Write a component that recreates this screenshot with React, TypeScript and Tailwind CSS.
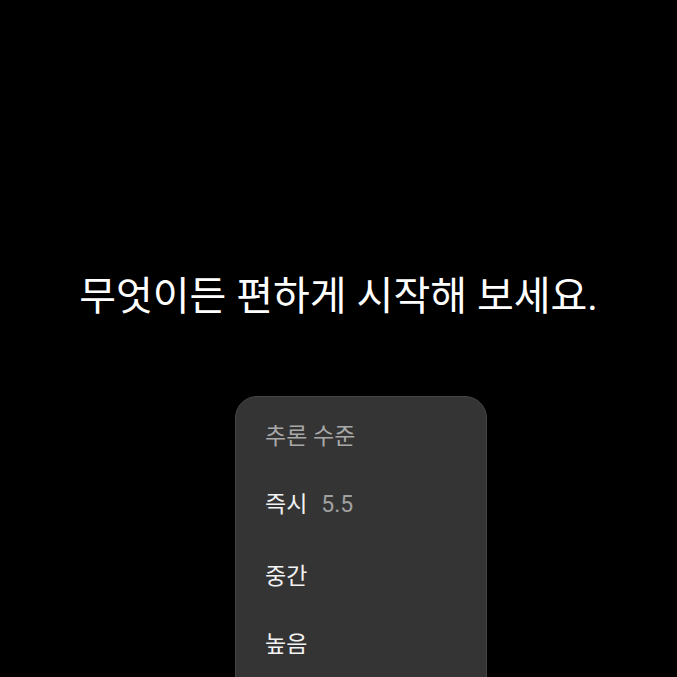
export default function App() {
  return (
    <div className="h-screen w-full overflow-hidden bg-black font-['Roboto','Noto_Sans_CJK_KR',sans-serif] text-white">
      <div className="flex flex-col pt-[273px]">
        <h1 className="text-center text-[40px] leading-[48px] font-normal">무엇이든 편하게 시작해 보세요.</h1>
        <div className="mt-[75px] pl-[235px]">
          <div className="w-[252px] h-[320px] rounded-[22px] border border-[#464646] bg-[#343434] pt-[25px] pl-[29px]">
            <div className="text-[23px] leading-[30px] text-[#a8a8a8]">추론 수준</div>
            <ul className="mt-[38px] flex flex-col text-[23px] leading-[30px]">
              <li className="flex items-center gap-[14px]">
                <span className="text-[#f2f2f2]">즉시</span>
                <span className="text-[#a0a0a0]">5.5</span>
              </li>
              <li className="mt-[42px] text-[#f2f2f2]">중간</li>
              <li className="mt-[38px] text-[#f2f2f2]">높음</li>
            </ul>
          </div>
        </div>
      </div>
    </div>
  );
}
